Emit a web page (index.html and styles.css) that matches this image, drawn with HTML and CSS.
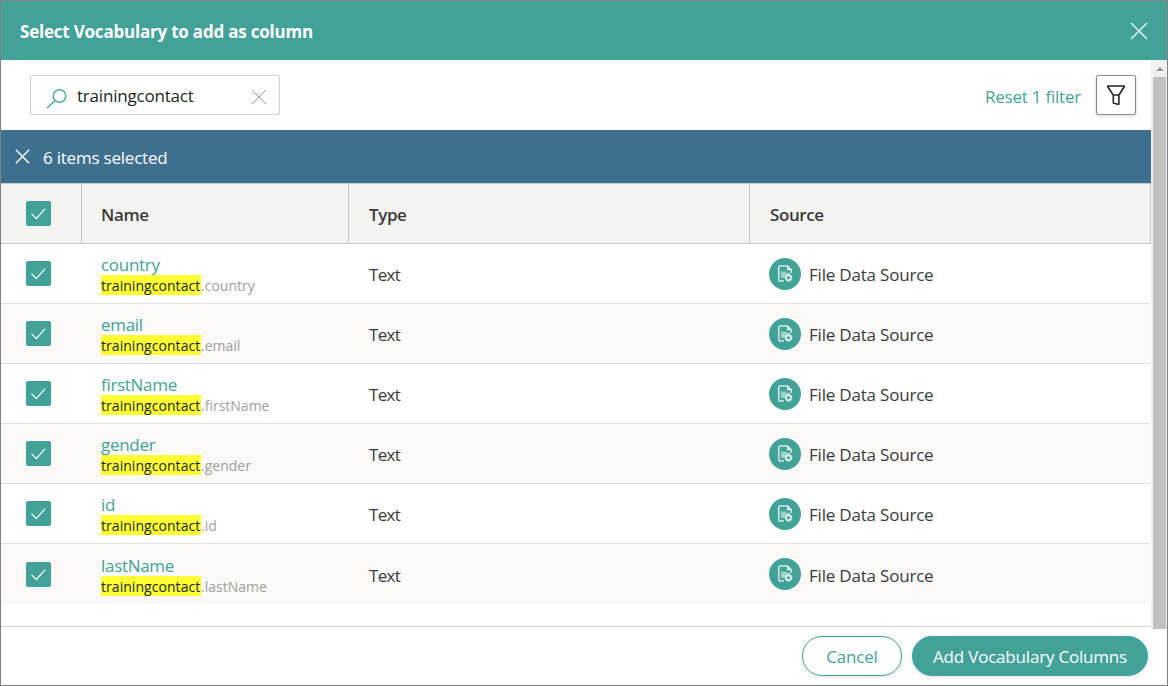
FILE: index.html
```html
<!DOCTYPE html>
<html lang="en">
<head>
<meta charset="utf-8">
<title>Select Vocabulary</title>
<link rel="stylesheet" href="styles.css">
</head>
<body>
<svg class="defs">
  <symbol id="tick" viewBox="0 0 25 25"><path d="M5.500 12.700l4.800 4.900L19 7.800" fill="none" stroke="#fff" stroke-width="1.200"/></symbol>
  <symbol id="cross" viewBox="0 0 18 18"><path d="M1 1l16 16M17 1L1 17" fill="none" stroke="currentColor"/></symbol>
  <symbol id="file" viewBox="0 0 32 32">
    <circle cx="16" cy="16" r="16" fill="#43a298"/>
    <path d="M15 23h-4a1.200 1.200 0 0 1-1.200-1.200V9.200A1.200 1.200 0 0 1 11 8h7.500l3.800 3.800V15" fill="none" stroke="#cfe9e5" stroke-width="1.500"/>
    <path d="M18 7.500l4.800 4.800H18z" fill="#e4f3f1"/>
    <path d="M12 13.500h5v1.200h4v1.300l-5 3v1h-4z" fill="#9fd0ca"/>
    <circle cx="19.500" cy="19.700" r="2.500" fill="#43a298" stroke="#d9efec" stroke-width="1.900"/>
    <circle cx="19.500" cy="19.700" r="3.600" fill="none" stroke="#b9dfda" stroke-width="0.800" stroke-dasharray="1.500 1.330"/>
  </symbol>
</svg>
<div class="dialog">
  <header class="titlebar"><h1 class="title">Select Vocabulary to add as column</h1><svg class="close"><use href="#cross"/></svg></header>
  <div class="body">
    <main class="content">
      <div class="toolbar">
        <div class="search">
          <svg class="lens" viewBox="0 0 22 22"><circle cx="13.500" cy="8" r="6.300"/><path d="M9 12.500L1.200 20"/></svg>
          <span class="query">trainingcontact</span>
          <svg class="clear"><use href="#cross"/></svg>
        </div>
        <span class="reset">Reset 1 filter</span>
        <div class="filter"><svg viewBox="0 0 20 22"><path d="M2.300 2h15.400q.8 0 .5.800L13 11H7.200L1.800 2.800Q1.500 2 2.300 2zM7.300 11v7.300q0 .8.700 1l4 1q.9.100.9-.8V11"/></svg></div>
      </div>
      <div class="selection"><svg class="deselect"><use href="#cross"/></svg><span class="count">6 items selected</span></div>
      <div class="row head">
        <div class="pick"><svg class="check"><use href="#tick"/></svg></div>
        <div class="name"><span class="th-name">Name</span></div><div class="type"><span class="th-type">Type</span></div><div class="source"><span class="th-source">Source</span></div>
      </div>
      <div class="row">
        <div class="pick"><svg class="check"><use href="#tick"/></svg></div>
        <div class="name"><a class="label">country</a><span class="key"><mark>trainingcontact</mark>.country</span></div>
        <div class="type"><span class="text">Text</span></div><div class="source"><svg class="badge"><use href="#file"/></svg><span class="origin">File Data Source</span></div>
      </div>
      <div class="row alt">
        <div class="pick"><svg class="check"><use href="#tick"/></svg></div>
        <div class="name"><a class="label">email</a><span class="key"><mark>trainingcontact</mark>.email</span></div>
        <div class="type"><span class="text">Text</span></div><div class="source"><svg class="badge"><use href="#file"/></svg><span class="origin">File Data Source</span></div>
      </div>
      <div class="row">
        <div class="pick"><svg class="check"><use href="#tick"/></svg></div>
        <div class="name"><a class="label">firstName</a><span class="key"><mark>trainingcontact</mark>.firstName</span></div>
        <div class="type"><span class="text">Text</span></div><div class="source"><svg class="badge"><use href="#file"/></svg><span class="origin">File Data Source</span></div>
      </div>
      <div class="row alt">
        <div class="pick"><svg class="check"><use href="#tick"/></svg></div>
        <div class="name"><a class="label">gender</a><span class="key"><mark>trainingcontact</mark>.gender</span></div>
        <div class="type"><span class="text">Text</span></div><div class="source"><svg class="badge"><use href="#file"/></svg><span class="origin">File Data Source</span></div>
      </div>
      <div class="row">
        <div class="pick"><svg class="check"><use href="#tick"/></svg></div>
        <div class="name"><a class="label">id</a><span class="key"><mark>trainingcontact</mark>.id</span></div>
        <div class="type"><span class="text">Text</span></div><div class="source"><svg class="badge"><use href="#file"/></svg><span class="origin">File Data Source</span></div>
      </div>
      <div class="row alt last">
        <div class="pick"><svg class="check"><use href="#tick"/></svg></div>
        <div class="name"><a class="label">lastName</a><span class="key"><mark>trainingcontact</mark>.lastName</span></div>
        <div class="type"><span class="text">Text</span></div><div class="source"><svg class="badge"><use href="#file"/></svg><span class="origin">File Data Source</span></div>
      </div>
    </main>
    <div class="scrollbar"><div class="up"></div><div class="thumb"></div></div>
  </div>
  <footer class="actions"><button class="btn"><span class="t-cancel">Cancel</span></button><button class="btn primary"><span class="t-add">Add Vocabulary Columns</span></button></footer>
</div>
</body>
</html>
```
FILE: styles.css
```css
* { box-sizing: border-box; }
body { margin: 0; font-family: "Open Sans", "Noto Sans", sans-serif; font-size: 17px; color: #3b3a39; background: #fff; }
svg { display: block; flex: none; overflow: visible; }
.defs { position: absolute; width: 0; height: 0; }
span, a, h1 { white-space: nowrap; }
.dialog { width: 1168px; height: 686px; border: 1px solid #808080; display: flex; flex-direction: column; overflow: hidden; }
.titlebar { height: 59px; background: #43a298; color: #fff; display: flex; align-items: center; justify-content: space-between; padding: 2px 19px 0 19px; }
.title { margin: 0; font-size: 17px; font-weight: 700; letter-spacing: -0.21px; line-height: 24px; }
.close { width: 18px; height: 18px; margin-bottom: 2px; color: #d9eeec; stroke-width: 1.6; }
.body { display: flex; height: 569px; }
.content { width: 1150px; height: 567px; border-bottom: 1px solid #d2d6cf; }
.toolbar { height: 70px; display: flex; align-items: center; padding: 0 15px 0 29px; }
.search { width: 250px; height: 40px; border: 1px solid #d2d0ce; border-radius: 2px; display: flex; align-items: center; padding: 0 12px 0 14px; color: #201f1e; }
.lens { width: 22px; height: 22px; margin: 8px 9px 0 1px; fill: none; stroke: #43a298; stroke-width: 1.3; }
.query { line-height: 24px; letter-spacing: -0.2px; padding-top: 2px; }
.clear { width: 16px; height: 16px; margin: 4px 0 0 auto; color: #979593; stroke-width: 1.1; }
.reset { margin-left: auto; margin-right: 15px; padding-top: 2px; color: #43a298; letter-spacing: -0.22px; }
.filter { width: 40px; height: 40px; border: 1px solid #8a8886; border-radius: 2px; box-shadow: 0 1px 4px rgba(0,0,0,.14); display: grid; place-items: center; }
.filter svg { width: 20px; height: 22px; fill: none; stroke: #252423; stroke-width: 1.6; }
.selection { height: 53px; background: #3e6f8e; color: #fff; display: flex; align-items: center; padding-left: 14px; gap: 13px; }
.deselect { width: 15px; height: 15px; margin-bottom: 1px; stroke-width: 1.7; }
.count { padding-top: 2px; letter-spacing: -0.22px; }
.row { height: 60px; display: grid; grid-template-columns: 80px 267px 401px 1fr; border-bottom: 1px solid #dfdfde; background: #fff; font-weight: 400; margin-right: 1px; }
.row > div { display: flex; align-items: center; }
.row.alt { background: #faf9f8; }
.row.last { border-bottom-color: #faf9f8; padding-top: 1px; }
.row.head { height: 61px; background: #f3f3f1; border: 1px solid #c8c8c8; border-left: 0; font-weight: 600; margin: 0; letter-spacing: -0.4px; }
.head > div + div { border-left: 1px solid #c8c8c8; }
.row > .pick { padding-left: 25px; }
.check { width: 25px; height: 25px; background: #43a298; border-radius: 2px; }
.row > .name { flex-direction: column; align-items: flex-start; justify-content: flex-start; padding-left: 20px; padding-top: 9px; }
.row.head > .name { justify-content: center; padding-left: 19px; padding-top: 2px; }
.label { color: #43a298; line-height: 24px; height: 22px; letter-spacing: -0.3px; }
.key { display: flex; height: 20px; color: #a19f9d; font-size: 14px; line-height: 21px; }
mark { width: 100px; height: 20px; background: #ff3; color: #201f1e; letter-spacing: 0.05px; }
.row > .type { padding-left: 20px; padding-top: 2px; }
.text { letter-spacing: -0.7px; padding-left: 1px; }
.row > .source { padding-left: 20px; gap: 8px; }
.row.head > .type, .row.head > .source { padding-left: 20px; padding-top: 2px; }
.badge { width: 32px; height: 32px; }
.origin { padding-top: 2px; letter-spacing: -0.2px; }
.scrollbar { width: 16px; background: #f0f0f0; padding-left: 2px; }
.up { height: 17px; display: grid; place-items: center; }
.up::before { content: ""; border: 4px solid transparent; border-top: 0; border-bottom-color: #969696; }
.thumb { height: 552px; width: 13px; background: #c1c1c1; }
.actions { display: flex; justify-content: flex-end; gap: 10px; padding: 7px 19px 0 0; }
.btn { width: 100px; height: 40px; padding: 0; border: 1px solid #43a298; border-radius: 20px; background: #fff; color: #43a298; font: 400 17px "Open Sans", "Noto Sans", sans-serif; letter-spacing: -0.2px; box-shadow: 0 1px 4px rgba(0,0,0,.12); }
.primary { width: 236px; background: #43a298; color: #fff; }
```
